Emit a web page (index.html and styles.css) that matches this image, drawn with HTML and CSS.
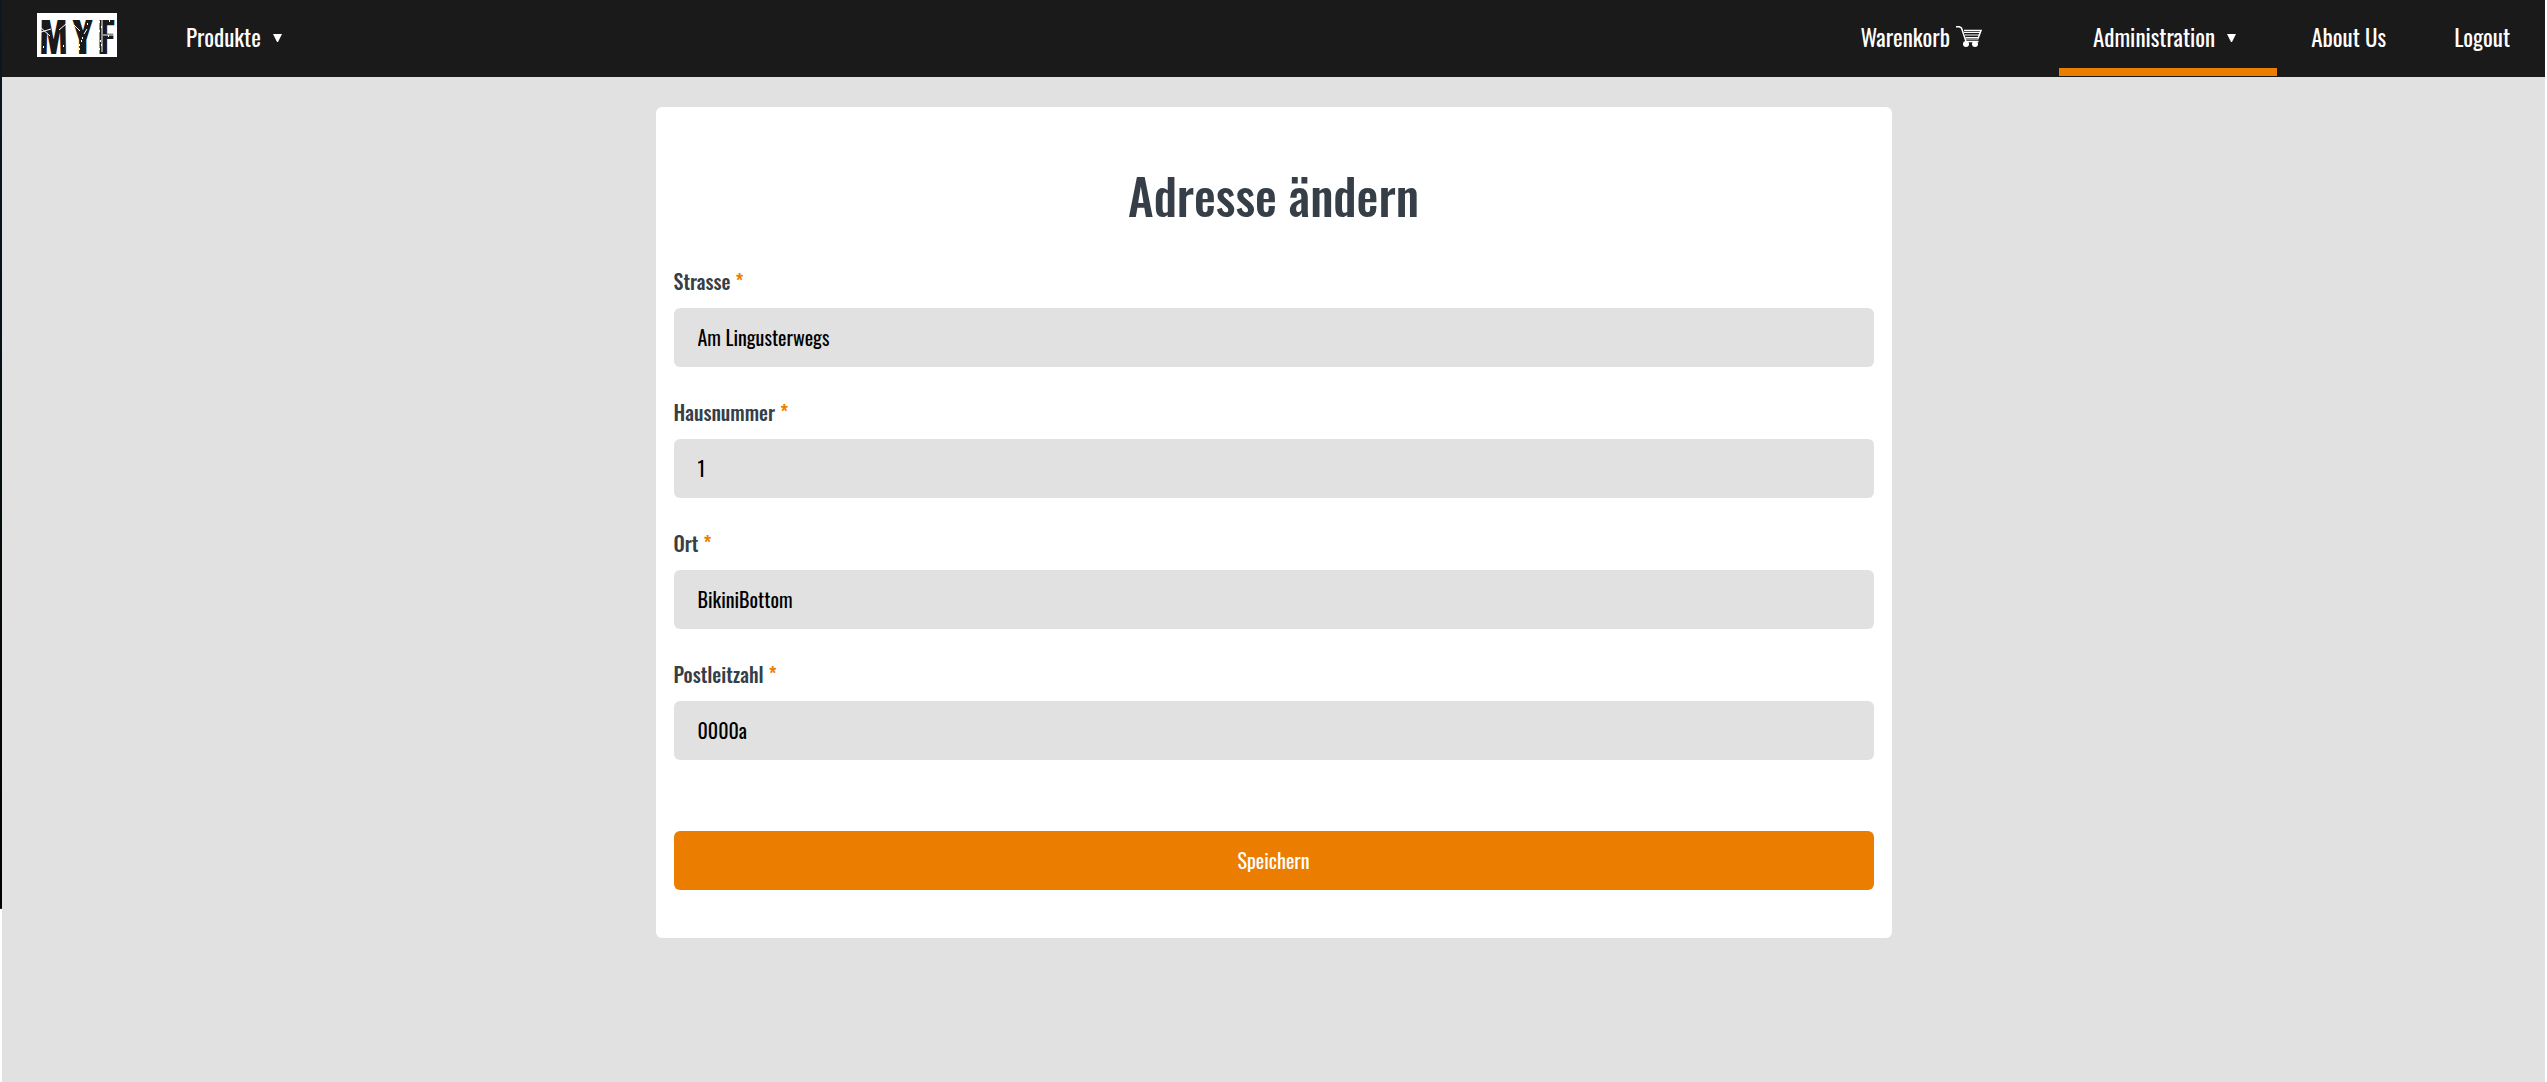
FILE: index.html
```html
<!DOCTYPE html>
<html lang="de">
<head>
<meta charset="utf-8">
<meta name="viewport" content="width=device-width, initial-scale=1">
<title>Adresse ändern</title>
<link rel="stylesheet" href="styles.css">
</head>
<body>
<header class="navbar">
  <a class="logo" href="#" aria-label="MYF">
    <span class="logo-text"><span>M</span><span>Y</span><span>F</span></span>
    <svg class="logo-wear" viewBox="0 0 80 44" aria-hidden="true">
      <path d="M1 20L14 16M3 14l10 9M22 17l7-6M37 12l6 6M47 21l3-5M66 22h12M65 4v35"/>
      <path class="dots" d="M42 32h1M44 28h1M50 11h1M45 25h1M42 36h1M62 9h1M64 14h1M62 18h1M63 28h1M64 32h1M62 36h1M72 8h1M6 34h1M26 33h1M71 23h1"/>
    </svg>
  </a>
  <nav class="menu">
    <a class="item" href="#">Produkte<svg class="caret" viewBox="0 0 16 10" aria-hidden="true"><path d="M0 1h9L5 9H4z"/></svg></a>
    <a class="item item-cart" href="#">Warenkorb<svg class="cart" viewBox="0 0 26 21" aria-hidden="true">
      <path class="frame" d="M0 .8h3.500l2 1.200L10 15.500H22.500M8 4.500h17L22 12.500"/>
      <path class="wires" d="M8 6.500h16M9 9h14.500M9.500 11.500h13.500M9.500 13h13"/>
      <circle cx="10" cy="18" r="3"/><circle cx="19" cy="18" r="3"/></svg></a>
    <a class="item active" href="#">Administration<svg class="caret" viewBox="0 0 16 10" aria-hidden="true"><path d="M0 1h9L5 9H4z"/></svg></a>
    <a class="item" href="#">About Us</a>
    <a class="item" href="#">Logout</a>
  </nav>
</header>
<main class="content">
  <form class="card">
    <h1 class="title">Adresse ändern</h1>
    <div class="field">
      <label for="street">Strasse <span class="required">*</span></label>
      <input id="street" type="text" value="Am Lingusterwegs" required>
    </div>
    <div class="field">
      <label for="number">Hausnummer <span class="required">*</span></label>
      <input id="number" type="text" value="1" required>
    </div>
    <div class="field">
      <label for="city">Ort <span class="required">*</span></label>
      <input id="city" type="text" value="BikiniBottom" required>
    </div>
    <div class="field">
      <label for="zip">Postleitzahl <span class="required">*</span></label>
      <input id="zip" type="text" value="0000a" required>
    </div>
    <button class="submit" type="submit">Speichern</button>
  </form>
</main>
</body>
</html>
```
FILE: styles.css
```css
* { box-sizing: border-box; }

html {
  min-height: 100%;
  background: linear-gradient(#0b1a20, #000) left top / 2px 84vh no-repeat #fff;
}

body {
  min-height: 100vh;
  margin: 0 2px;
  background: #e1e1e1;
  color: #363f47;
  font-family: Oswald, "Liberation Sans Narrow", "Liberation Sans", sans-serif;
  font-size: 20px;
}

.navbar {
  display: flex;
  align-items: center;
  height: 77px;
  padding: 0 1px 0 35px;
  background: #1a1a1a;
}

.logo {
  position: relative;
  display: flex;
  align-items: center;
  justify-content: center;
  flex: none;
  width: 80px;
  height: 44px;
  margin: 0 35px 8px 0;
  background: #fff;
  color: #1a1a1a;
  text-decoration: none;
}

.logo-text {
  display: flex;
  gap: 4px;
  font-size: 42px;
  font-weight: 700;
  line-height: 64px;
}

.logo-wear {
  position: absolute;
  inset: 0;
  fill: none;
  stroke: #fff;
  stroke-width: 1;
}

.dots { stroke-width: 2; }

.menu {
  display: flex;
  flex: 1;
  align-self: stretch;
}

.item {
  display: flex;
  align-items: center;
  padding: 6px 34px 1px;
  border-bottom: 8px solid transparent;
  margin-bottom: 1px;
  color: #fff;
  font-size: 23px;
  text-decoration: none;
  white-space: nowrap;
}

.item-cart {
  margin-left: auto;
  margin-right: 43px;
}

.active { border-bottom-color: #eb7d00; }

.caret {
  width: 16px;
  height: 10px;
  margin: 2px 0 0 12px;
  fill: #fff;
}

.cart {
  width: 26px;
  height: 21px;
  margin-left: 6px;
  fill: #fff;
}

.cart path {
  fill: none;
  stroke: #fff;
  stroke-width: 1;
}

.cart .frame { stroke-width: 1.5; }

.content { padding: 30px 20px; }

.card {
  max-width: 1236px;
  margin: 0 auto;
  padding: 52px 18px 48px;
  border-radius: 6px;
  background: #fff;
}

.title {
  margin: 0 0 26px;
  font-size: 49px;
  font-weight: 500;
  line-height: 72px;
  text-align: center;
}

.field { margin-bottom: 21px; }

.field label {
  display: block;
  padding: 4px 0 7px;
  font-size: 20px;
  font-weight: 500;
  line-height: 40px;
}

.required { color: #eb7d00; }

.field input,
.submit {
  display: block;
  width: 100%;
  height: 59px;
  border: 0;
  border-radius: 6px;
  font-family: inherit;
  font-size: 20px;
}

.field input {
  padding: 0 24px 2px;
  background: #e1e1e1;
  color: #000;
}

.submit {
  margin-top: 71px;
  padding-bottom: 3px;
  background: #eb7d00;
  color: #fff;
}
```
